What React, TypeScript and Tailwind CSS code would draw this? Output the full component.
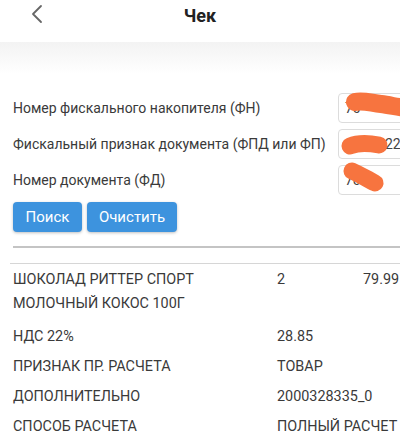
import React from "react";

const font = { fontFamily: "Roboto, 'Noto Sans', sans-serif" };

function Field({ label, value, scribble }: { label: string; value: React.ReactNode; scribble: React.ReactNode }) {
  return (
    <div className="flex h-[36px] items-center">
      <div className="w-[338px] shrink-0 whitespace-nowrap pl-[13px] text-[14px] text-[#3a3a3a]">{label}</div>
      <div className="relative h-[30px] w-[90px] shrink-0 rounded-[4px] border border-[#dcdcdc] bg-white pl-[6px] text-[14px] leading-[28px] text-[#444]">
        {value}
        {scribble}
      </div>
    </div>
  );
}

function Row({ a, b, c }: { a: string; b?: string; c?: string }) {
  return (
    <div className="flex h-[30px] items-center whitespace-nowrap text-[14.4px] text-[#3a3a3a]">
      <div className="w-[277px] shrink-0 pl-[13px]">{a}</div>
      <div className="w-[86px] shrink-0">{b}</div>
      <div>{c}</div>
    </div>
  );
}

export default function App() {
  return (
    <div className="h-[446px] w-[400px] overflow-hidden bg-white" style={font}>
      <div className="relative flex h-[42px] items-center justify-center bg-white">
        <svg className="absolute left-[30px] top-[4px]" width="14" height="20" viewBox="0 0 14 20">
          <path d="M11 2 L3 10 L11 18" fill="none" stroke="#666" strokeWidth="1.8" strokeLinecap="round" strokeLinejoin="round" />
        </svg>
        <div className="mt-[-12px] text-[18px] font-bold text-[#222]">Чек</div>
      </div>
      <div className="h-[32px] bg-gradient-to-b from-[#f3f3f3] to-white" />
      <div className="mt-[16px] flex flex-col">
        <Field
          label="Номер фискального накопителя (ФН)"
          value="70"
          scribble={
            <svg className="absolute left-[-4px] top-[-6px] overflow-visible" width="100" height="40" viewBox="0 0 100 40">
              <path d="M20 14 C28 12 36 15 46 16 C54 17 62 19 70 20" fill="none" stroke="#f7743f" strokeWidth="18" strokeLinecap="round" />
            </svg>
          }
        />
        <Field
          label="Фискальный признак документа (ФПД или ФП)"
          value={<span className="pl-[40px]">22</span>}
          scribble={
            <svg className="absolute left-[-4px] top-[-6px] overflow-visible" width="100" height="40" viewBox="0 0 100 40">
              <path d="M15 22 C22 19 34 19 44 21" fill="none" stroke="#f7743f" strokeWidth="17" strokeLinecap="round" />
            </svg>
          }
        />
        <Field
          label="Номер документа (ФД)"
          value="70"
          scribble={
            <svg className="absolute left-[-4px] top-[-6px] overflow-visible" width="100" height="40" viewBox="0 0 100 40">
              <path d="M17 11 C24 14 32 19 40 23" fill="none" stroke="#f7743f" strokeWidth="17" strokeLinecap="round" />
            </svg>
          }
        />
      </div>
      <div className="mt-[4px] flex gap-[5px] pl-[13px]">
        <button className="h-[30px] w-[69px] rounded-[4px] bg-[#3d93de] text-[15px] text-white shadow-[0_1px_3px_rgba(0,0,0,0.25)]">Поиск</button>
        <button className="h-[30px] w-[90px] rounded-[4px] bg-[#3d93de] text-[15px] text-white shadow-[0_1px_3px_rgba(0,0,0,0.25)]">Очистить</button>
      </div>
      <div className="ml-[13px] mt-[14px] h-[2px] bg-[#c4c4c4]" />
      <div className="ml-[10px] mt-[15px] h-px bg-[#d6d6d6]" />
      <div className="mt-[1px]">
        <Row a="ШОКОЛАД РИТТЕР СПОРТ" b="2" c="79.99" />
        <div className="-mt-[6px]">
          <Row a="МОЛОЧНЫЙ КОКОС 100Г" />
        </div>
        <div className="mt-[3px]">
          <Row a="НДС 22%" b="28.85" />
        </div>
        <Row a="ПРИЗНАК ПР. РАСЧЕТА" b="ТОВАР" />
        <Row a="ДОПОЛНИТЕЛЬНО" b="2000328335_0" />
        <Row a="СПОСОБ РАСЧЕТА" b="ПОЛНЫЙ РАСЧЕТ" />
      </div>
    </div>
  );
}
